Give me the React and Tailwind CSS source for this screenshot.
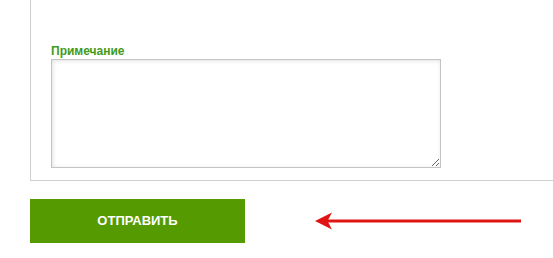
export default function App() {
  return (
    <div className="h-[258px] w-[553px] bg-white font-['Liberation_Sans',Arial,sans-serif] overflow-hidden">
      <div className="ml-[30px] h-[181px] border-l border-b border-[#cfcfcf] pl-[20px] pt-[44px]">
        <div className="text-[12px] leading-[15px] font-bold text-[#3f9a1e]">Примечание</div>
        <textarea
          className="block w-[390px] h-[109px] border border-[#c4c4c4] bg-white shadow-[inset_1px_1px_4px_rgba(0,0,0,0.12)] outline-none resize"
        />
      </div>
      <div className="flex items-center mt-[18px] ml-[30px]">
        <button className="w-[215px] h-[44px] bg-[#559a00] text-white text-[13px] font-bold">
          ОТПРАВИТЬ
        </button>
        <svg width="209" height="20" viewBox="0 0 209 20" className="ml-[69px]">
          <line x1="12" y1="10" x2="207" y2="10" stroke="#e11414" strokeWidth="3" />
          <path d="M1 10 L18 1.5 L13.5 10 L18 18.5 Z" fill="#e11414" />
        </svg>
      </div>
    </div>
  );
}
